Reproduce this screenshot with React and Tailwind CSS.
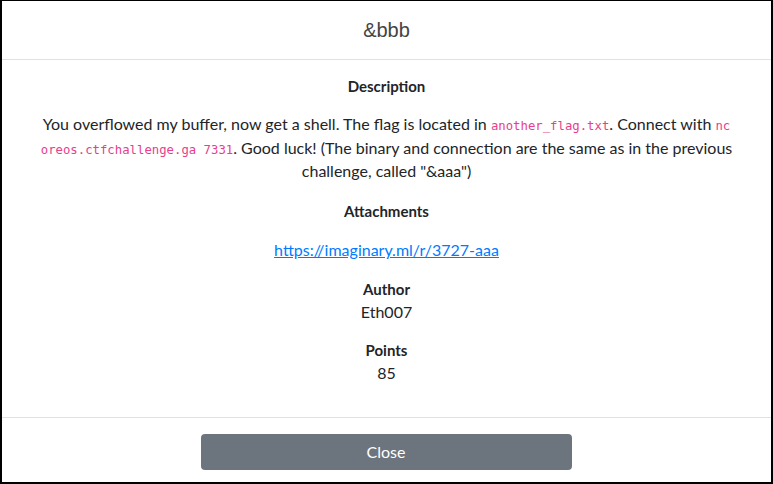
import React from 'react';

const Code = ({ children }) => (
  <code className="font-['DejaVu_Sans_Mono',monospace] text-[12.3px] leading-[18px] text-[#e83e8c]">{children}</code>
);

const App = () => {
  return (
    <div className="h-[484px] w-[773px] bg-white">
      <div className="flex h-full w-full flex-col border-t border-r-2 border-b-2 border-l-2 border-black font-['Lato',sans-serif] text-[#212529]">
        {/* Header */}
        <div className="flex h-[59px] shrink-0 items-center justify-center border-b border-[#dee2e6]">
          <h5 className="font-['Liberation_Sans',sans-serif] text-[20px] text-[#444]">&amp;bbb</h5>
        </div>

        {/* Body */}
        <div className="flex flex-1 flex-col items-center px-[16px] pt-[15px] text-center text-[16px]">
          <h6 className="text-[15px] font-bold leading-[22px]">Description</h6>
          <p className="mt-[15px] leading-[23.5px]">
            You overflowed my buffer, now get a shell. The flag is located in <Code>another_flag.txt</Code>. Connect with <Code>nc</Code> <Code>oreos.ctfchallenge.ga 7331</Code>. Good luck! (The binary and connection are the same as in the previous challenge, called "&amp;aaa")
          </p>
          <h6 className="mt-[17px] text-[15px] font-bold leading-[22px]">Attachments</h6>
          <a href="#" className="mt-[17px] leading-[22px] text-[#007bff] underline">https://imaginary.ml/r/3727-aaa</a>
          <h6 className="mt-[17px] text-[15px] font-bold leading-[22px]">Author</h6>
          <p className="leading-[23px]">Eth007</p>
          <h6 className="mt-[16px] text-[15px] font-bold leading-[22px]">Points</h6>
          <p className="leading-[23px]">85</p>
        </div>

        {/* Footer */}
        <div className="flex h-[65px] shrink-0 items-start justify-center border-t border-[#dee2e6] pt-[16px]">
          <button className="mr-[1px] h-[36px] w-[371px] rounded-[4px] bg-[#6c757d] text-[16px] text-white">Close</button>
        </div>
      </div>
    </div>
  );
};

export default App;
